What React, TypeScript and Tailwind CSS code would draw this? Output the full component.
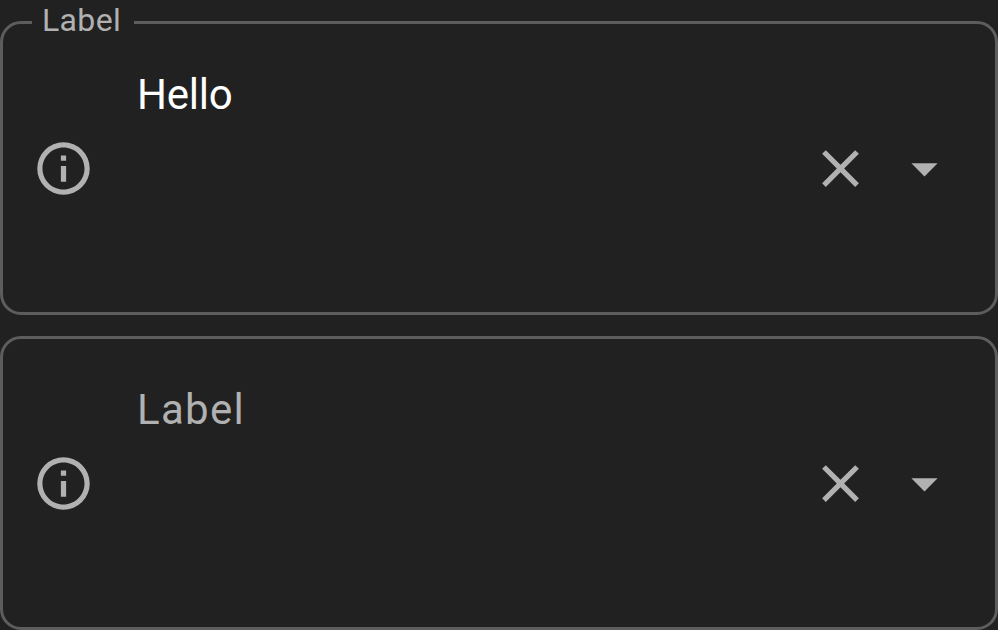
function Field({ floating }: { floating?: boolean }) {
  return (
    <section className="relative flex h-[294px] w-full items-center rounded-[21px] border-[3px] border-[#5d5d5d] text-[#b1b1b1]">
      {floating && (
        <span className="absolute -top-[3px] left-[29px] h-[3px] w-[102px] bg-[#212121]">
          <span className="absolute left-[10px] top-[-19px] text-[32px] leading-[37px] tracking-[0.35px]">Label</span>
        </span>
      )}
      <svg className="ml-[29px] size-[63px] shrink-0" viewBox="0 0 24 24" fill="currentColor">
        <path d="M11 9h2V7h-2m1 13c-4.41 0-8-3.59-8-8s3.59-8 8-8 8 3.59 8 8-3.59 8-8 8m0-18A10 10 0 1 0 12 22 10 10 0 0 0 12 2m-1 15h2v-6h-2v6Z" />
      </svg>
      <div className="ml-[42px] flex h-full flex-1 items-start pt-[46px] text-[42px] leading-[49px]">
        {floating ? <span className="tracking-[-0.2px] text-white">Hello</span> : <span className="tracking-[1.3px]">Label</span>}
      </div>
      <svg className="size-[63px] shrink-0" viewBox="0 0 24 24" fill="currentColor">
        <path d="M19 6.41 17.59 5 12 10.59 6.41 5 5 6.41 10.59 12 5 17.59 6.41 19 12 13.41 17.59 19 19 17.59 13.41 12Z" />
      </svg>
      <svg className="ml-[21px] mr-[39px] size-[63px] shrink-0" viewBox="0 0 24 24" fill="currentColor">
        <path d="m7 10 5 5 5-5Z" />
      </svg>
    </section>
  );
}

export default function App() {
  return (
    <main className="flex h-[630px] w-[998px] flex-col gap-[21px] overflow-hidden bg-[#212121] pt-[21px] font-['Roboto',sans-serif]">
      <Field floating />
      <Field />
    </main>
  );
}
